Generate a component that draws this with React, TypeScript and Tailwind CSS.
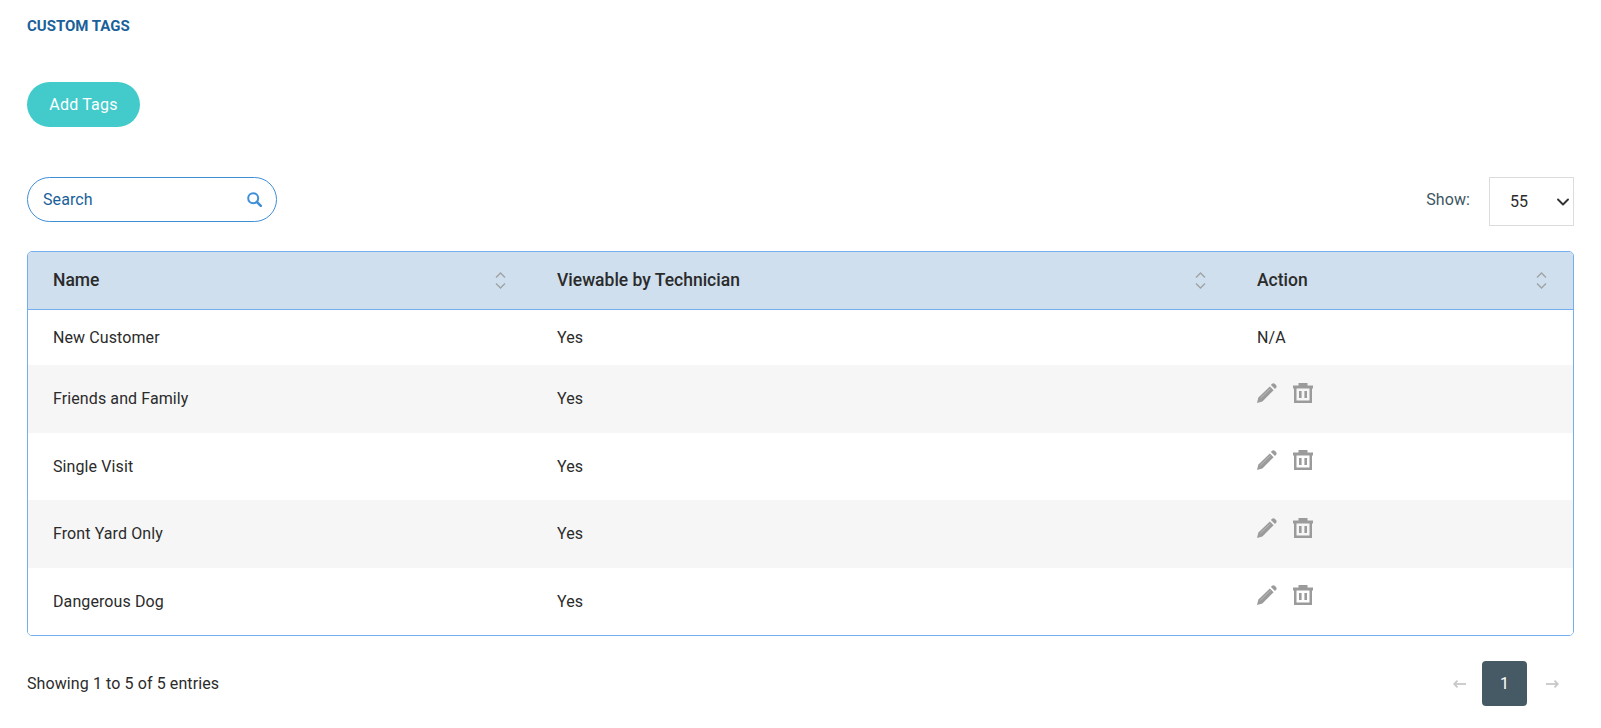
import { ChevronDown } from 'lucide-react'

const tags = [
  { name: 'New Customer', viewable: 'Yes', editable: false, height: 'h-[56px]', cell: 'pl-[25px] pt-[2px]' },
  { name: 'Friends and Family', viewable: 'Yes', editable: true, height: 'h-[68px]', cell: 'pl-[25px]' },
  { name: 'Single Visit', viewable: 'Yes', editable: true, height: 'h-[67px]', cell: 'pl-[25px]' },
  { name: 'Front Yard Only', viewable: 'Yes', editable: true, height: 'h-[68px]', cell: 'pl-[25px]' },
  { name: 'Dangerous Dog', viewable: 'Yes', editable: true, height: 'h-[67px]', cell: 'pl-[25px]' },
]

function SortIcon() {
  return (
    <svg width="11" height="17" viewBox="0 0 11 17" fill="none" stroke="#9fa3a6" strokeWidth="1.4">
      <path d="M1 5.500L5.500 1 10 5.500" />
      <path d="M1 11.500L5.500 16 10 11.500" />
    </svg>
  )
}

function SearchIcon() {
  return (
    <svg width="15" height="15" viewBox="0 0 15 15" fill="none" stroke="#3f8fd6">
      <circle cx="6.200" cy="6.200" r="5" strokeWidth="2" />
      <path d="M9.800 9.800L13.800 13.800" strokeWidth="2.600" strokeLinecap="round" />
    </svg>
  )
}

function PencilIcon() {
  return (
    <svg width="20" height="20" viewBox="0 0 20 20" fill="#9b9b9b">
      <path d="M0 20l1.400-5.400L12.800 3.400l3.800 3.800L5.400 18.600 0 20z" />
      <path d="M3.400 15.200L13.400 5.400" stroke="#f6f6f6" strokeWidth=".6" opacity=".6" />
      <path d="M14.800 1c.9-.9 2.300-1 3.200-.1l1 1c.9.900.8 2.300-.1 3.200l-.9.9-4.100-4.100.9-.9z" />
    </svg>
  )
}

function TrashIcon() {
  return (
    <svg width="20" height="20" viewBox="0 0 20 20" fill="#9b9b9b">
      <path d="M5.500 0h9v2.500H20v3h-1V20H1V5.500H0v-3h5.500V0zM3.500 5.500v12h13v-12h-13z" fillRule="evenodd" />
      <path d="M6 8h2.600v7H6zM11.400 8H14v7h-2.600z" />
    </svg>
  )
}

function ArrowLeftIcon() {
  return (
    <svg width="13" height="8" viewBox="0 0 13 8" fill="none" stroke="#c8c8c8" strokeWidth="1.800">
      <path d="M13 4H1" />
      <path d="M4.500 .7L1.200 4l3.300 3.300" />
    </svg>
  )
}

function ArrowRightIcon() {
  return (
    <svg width="13" height="8" viewBox="0 0 13 8" fill="none" stroke="#c8c8c8" strokeWidth="1.800">
      <path d="M0 4h12" />
      <path d="M8.500 .7L11.800 4 8.500 7.300" />
    </svg>
  )
}

export default function App() {
  return (
    <div className="min-h-[728px] bg-white px-[27px] pt-[17px] font-['Roboto',sans-serif] text-[#2b2b2b] tracking-[0.1px]">
      <h1 className="text-[15px] leading-[18px] font-bold text-[#1a6199] uppercase tracking-normal">Custom Tags</h1>

      <button className="mt-[47px] block w-[113px] h-[45px] rounded-full bg-[#43cbcb] text-white text-[16px] tracking-[0.2px]">
        Add Tags
      </button>

      {/* Search and page size */}
      <div className="mt-[50px] flex items-start justify-between">
        <div className="flex items-center justify-between w-[250px] h-[45px] rounded-full border border-[#3f8fd6] pl-[15px] pr-[14px]">
          <span className="text-[16px] text-[#1a6199]">Search</span>
          <SearchIcon />
        </div>
        <div className="flex items-start">
          <span className="mt-[13px] text-[16px] leading-[19px] text-[#3d5561]">Show:</span>
          <div className="ml-[19px] flex items-center justify-between w-[85px] h-[49px] border border-[#dcdcdc] pl-[20px]">
            <span className="text-[16px]">55</span>
            <ChevronDown className="w-[20px] h-[20px] text-[#333]" strokeWidth={2.3} />
          </div>
        </div>
      </div>

      {/* Tags table */}
      <div className="mt-[25px] w-[1547px] border border-[#74aeef] rounded-[5px] overflow-hidden">
        <table className="w-full table-fixed border-collapse text-[16px]">
          <thead>
            <tr className="h-[57px] bg-[#cfdfee] border-b border-[#74aeef] text-[17.500px] tracking-normal">
              <th className="w-[504px] pl-[25px] pr-[26px] text-left font-medium">
                <div className="flex items-center justify-between">Name <SortIcon /></div>
              </th>
              <th className="w-[700px] pl-[25px] pr-[26px] text-left font-medium">
                <div className="flex items-center justify-between">Viewable by Technician <SortIcon /></div>
              </th>
              <th className="pl-[25px] pr-[26px] text-left font-medium">
                <div className="flex items-center justify-between">Action <SortIcon /></div>
              </th>
            </tr>
          </thead>
          <tbody>
            {tags.map((tag, index) => (
              <tr key={index} className={`${tag.height} ${index % 2 === 1 ? 'bg-[#f6f6f6]' : 'bg-white'}`}>
                <td className={tag.cell}>{tag.name}</td>
                <td className={tag.cell}>{tag.viewable}</td>
                <td className={tag.cell}>
                  {tag.editable ? (
                    <div className="flex items-center gap-[16px] -mt-[13px]">
                      <PencilIcon />
                      <TrashIcon />
                    </div>
                  ) : (
                    'N/A'
                  )}
                </td>
              </tr>
            ))}
          </tbody>
        </table>
      </div>

      {/* Footer */}
      <div className="mt-[25px] flex items-center justify-between">
        <span className="text-[16px]">Showing 1 to 5 of 5 entries</span>
        <div className="flex items-center pr-[15px]">
          <ArrowLeftIcon />
          <span className="ml-[16px] mr-[19px] flex items-center justify-center w-[45px] h-[45px] rounded-[4px] bg-[#455a64] text-white text-[16px]">
            1
          </span>
          <ArrowRightIcon />
        </div>
      </div>
    </div>
  )
}
